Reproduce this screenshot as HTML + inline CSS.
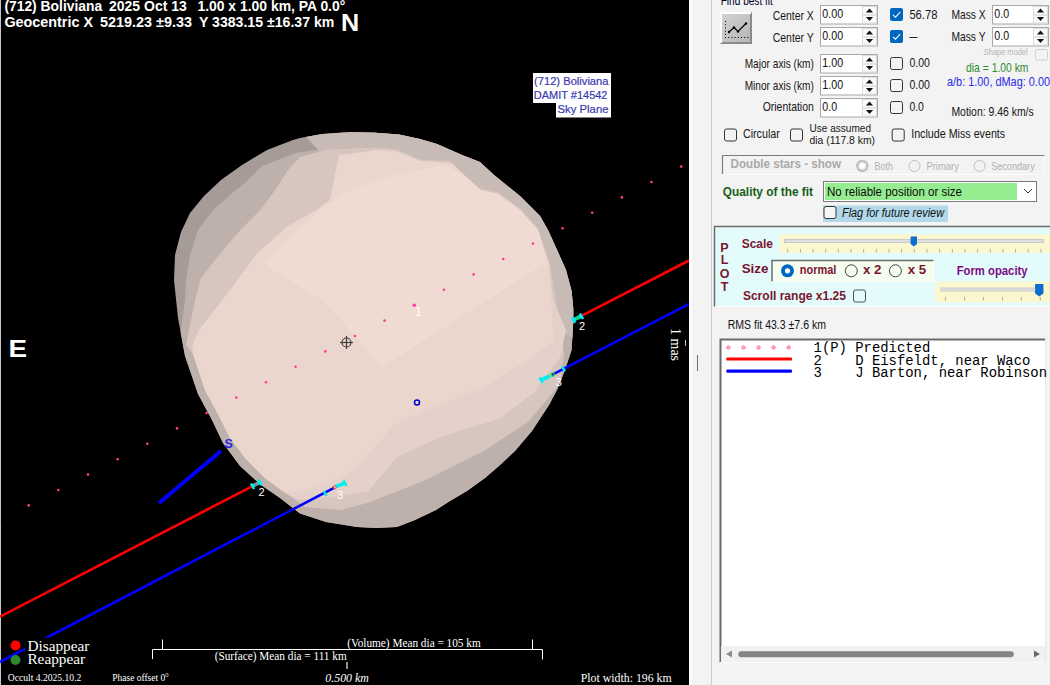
<!DOCTYPE html>
<html><head><meta charset="utf-8">
<style>
html,body{margin:0;padding:0;}
body{width:1050px;height:685px;overflow:hidden;position:relative;background:#f3f3f3;}
svg{position:absolute;left:0;top:0;}
.s{font-family:"Liberation Sans",sans-serif;}
.sf{font-family:"Liberation Serif",serif;}
.m{font-family:"Liberation Mono",monospace;}
</style></head><body>
<svg width="1050" height="685" viewBox="0 0 1050 685">
<rect x="689" y="0" width="361" height="685" fill="#f3f3f3"/>

<rect x="0" y="0" width="689" height="685" fill="#000"/>
<rect x="0" y="0" width="1" height="685" fill="#c8c8c8"/>

<defs><clipPath id="clipA"><polygon points="300,138 322,134 351,132 372,132.5 399,134.4 420,139 437,144 462,155 480,162 494,175 520,196 540,216 548,230 557.5,251 566,270 571.6,291 573.3,309 573.3,321 571.6,350 565,370 557,390 549,405 532,431 515,451 499,466 485,478 467,491 450,501 436,510 415,520 397,527 376,528 357,527 326,522 300,513.6 280,498 261,485 240,466 223,443 212,420 198,394 185,356 178,318 174,280 175,255 181,232 190,213 204,196 221,180 242,165 267,150 293,140"/></clipPath></defs>
<polygon fill="#a69b97" points="300,138 322,134 351,132 372,132.5 399,134.4 420,139 437,144 462,155 480,162 494,175 520,196 540,216 548,230 557.5,251 566,270 571.6,291 573.3,309 573.3,321 571.6,350 565,370 557,390 549,405 532,431 515,451 499,466 485,478 467,491 450,501 436,510 415,520 397,527 376,528 357,527 326,522 300,513.6 280,498 261,485 240,466 223,443 212,420 198,394 185,356 178,318 174,280 175,255 181,232 190,213 204,196 221,180 242,165 267,150 293,140"/>
<g clip-path="url(#clipA)">
<polygon fill="#beb0ab" points="181,330 185,300 186,280 190,255 198,230 213,210 230,195 248,180 262,166 295.7,153.1 325.4,148.6 339,148.6 360,140 380,128 600,100 620,560 150,560 150,380 178,340"/>
<polygon fill="#c8bab5" points="270,100 600,100 600,360 562,330 556,300 550.5,265 538,228 520,208 498,192 480,188.4 464.6,174.7 450.9,161 420,159.3 396,149 377.1,147.3 339.4,149 320,151.7"/>
<polygon fill="#d7c6bf" points="186,345 195,300 200.5,278.6 219.8,254 240.8,229.5 260,210.3 275.8,189.3 288,170 300,157 325,150 339.4,149 377.1,147.3 396,149 420,159.3 450.9,161 464.6,174.7 480,188.4 498,192 520,208 538,228 550.5,265 556,300 562,330 564,355 560,384 528,422 484,451 426,480 367.5,503 340,510 305,507 284,492 265,478 246,459 230,438 219,416 205,390 193,354 186,345"/>
<polygon fill="#e4d1c9" points="199,330 230.3,290 256.5,254 288,226 316,210.3 330,200 339,155.4 377,150 396,151 420,161 451,163 465,176 480,190 498,194 520,210 538,230 549,265 553,300 566,330 560,357.5 534,392.5 499,419 443,436 397,457 367.5,492 330,497 300,500 284,492 265,478 246,459 230,438 219,416 205,390 193,354 192,345"/>
<polygon fill="#ebd6cd" points="199,330 230.3,290 256.5,254 288,226 316,210.3 330,200 339,155.4 377,150 396,151 420,161 451,163 465,176 480,190 498,194 520,210 538,230 549,265 551,300 554,340 528,360 484,387 426,410 394,425 353,471 327,484 300,491 284,492 265,478 246,459 230,438 219,416 205,390 193,354 194,345"/>
<polygon fill="#efdbd2" points="264.3,262.9 292.9,234.3 321.4,208.6 352.9,188.6 398.6,174.3 445,165 465,176 480,190 498,194 520,210 538,230 549,265 542,265 382,367 325,302 276,272"/>
</g>

<!-- chords -->
<line x1="0" y1="616.7" x2="254" y2="485.4" stroke="#ff0000" stroke-width="2.6"/>
<line x1="580" y1="316.6" x2="689" y2="260.5" stroke="#ff0000" stroke-width="2.6"/>
<line x1="0" y1="662" x2="334" y2="487.9" stroke="#0000ff" stroke-width="2.6"/>
<line x1="552" y1="374.8" x2="689" y2="303.8" stroke="#0000ff" stroke-width="2.6"/>
<line x1="159" y1="503" x2="221" y2="451" stroke="#0000ff" stroke-width="4"/>
<text class="s" x="224.5" y="447.5" fill="#2424e0" font-weight="bold" font-size="12.5">S</text>
<circle cx="681.2" cy="166.6" r="1.3" fill="#ff3a9a"/>
<circle cx="651.5" cy="182.0" r="1.3" fill="#ff3a9a"/>
<circle cx="621.9" cy="197.4" r="1.3" fill="#ff3a9a"/>
<circle cx="592.2" cy="212.8" r="1.3" fill="#ff3a9a"/>
<circle cx="562.6" cy="228.2" r="1.3" fill="#ff3a9a"/>
<circle cx="532.9" cy="243.6" r="1.3" fill="#ff3a9a"/>
<circle cx="503.2" cy="259.0" r="1.3" fill="#ff3a9a"/>
<circle cx="473.6" cy="274.4" r="1.3" fill="#ff3a9a"/>
<circle cx="443.9" cy="289.8" r="1.3" fill="#ff3a9a"/>
<circle cx="414.3" cy="305.2" r="1.7" fill="#ff3a9a"/>
<circle cx="384.6" cy="320.6" r="1.3" fill="#ff3a9a"/>
<circle cx="354.9" cy="336.0" r="1.3" fill="#ff3a9a"/>
<circle cx="325.3" cy="351.4" r="1.3" fill="#ff3a9a"/>
<circle cx="295.6" cy="366.8" r="1.3" fill="#ff3a9a"/>
<circle cx="266.0" cy="382.2" r="1.3" fill="#ff3a9a"/>
<circle cx="236.3" cy="397.6" r="1.3" fill="#ff3a9a"/>
<circle cx="206.6" cy="413.0" r="1.3" fill="#ff3a9a"/>
<circle cx="177.0" cy="428.4" r="1.3" fill="#ff3a9a"/>
<circle cx="147.3" cy="443.8" r="1.3" fill="#ff3a9a"/>
<circle cx="117.7" cy="459.2" r="1.3" fill="#ff3a9a"/>
<circle cx="88.0" cy="474.6" r="1.3" fill="#ff3a9a"/>
<circle cx="58.3" cy="490.0" r="1.3" fill="#ff3a9a"/>
<circle cx="28.7" cy="505.4" r="1.3" fill="#ff3a9a"/>
<circle cx="-1.0" cy="520.8" r="1.3" fill="#ff3a9a"/>
<text class="s" x="415" y="316" fill="#fff" font-size="12">1</text>
<!-- markers -->
<g stroke="#00f0f0" fill="none" stroke-linecap="butt">
<path d="M252.5,486 L260,482.3" stroke-width="3.6"/><path d="M251,483.5 L254,489 M258.5,479.7 L261.5,485" stroke-width="2.6"/>
<path d="M573.5,319.8 L581.5,316" stroke-width="3.6"/><path d="M572,317.3 L575,322.8 M580,313.5 L583,319" stroke-width="2.6"/>
<path d="M336,486.5 L345,483" stroke-width="3.6"/><path d="M343.5,480.5 L346.5,486" stroke-width="2.6"/>
<path d="M323.8,490.8 L326.6,495.8" stroke-width="2.4"/>
<path d="M541,380 L550,376" stroke-width="3.6"/><path d="M539.5,377.5 L542.5,383" stroke-width="2.6"/>
<path d="M562,366.2 L564.8,371.4" stroke-width="2.4"/>
</g>
<circle cx="334.6" cy="487.3" r="1.6" fill="none" stroke="#ff3030" stroke-width="1"/>
<circle cx="256.3" cy="484.2" r="1.4" fill="none" stroke="#ff3030" stroke-width="1"/>
<circle cx="552.7" cy="374.6" r="1.8" fill="none" stroke="#20e020" stroke-width="1.2"/>
<circle cx="577.5" cy="318" r="1.4" fill="none" stroke="#20c020" stroke-width="1"/>
<g class="s" fill="#fff" font-size="11">
<text x="258.5" y="496">2</text>
<text x="579" y="330">2</text>
<text x="337" y="498.6">3</text>
<text x="555.7" y="385.5">3</text>
</g>
<!-- crosshair -->
<g stroke="#404040" stroke-width="1.2" fill="none"><circle cx="346.5" cy="342.5" r="4.5"/><line x1="340" y1="342.5" x2="353" y2="342.5"/><line x1="346.5" y1="336" x2="346.5" y2="349"/></g>
<circle cx="417" cy="402.6" r="2.5" fill="none" stroke="#0000d0" stroke-width="1.5"/>

<!-- title -->
<g class="s" fill="#fff" font-weight="bold" font-size="14.2">
<text x="4.4" y="11.2" textLength="97.8" lengthAdjust="spacingAndGlyphs">(712) Boliviana</text>
<text x="109" y="11.2" textLength="77.8" lengthAdjust="spacingAndGlyphs">2025 Oct 13</text>
<text x="197.4" y="11.2" textLength="147.9" lengthAdjust="spacingAndGlyphs">1.00 x 1.00 km, PA 0.0°</text>
<text x="4.4" y="27.2" textLength="88.6" lengthAdjust="spacingAndGlyphs">Geocentric  X</text>
<text x="99.9" y="27.2" textLength="92.2" lengthAdjust="spacingAndGlyphs">5219.23 ±9.33</text>
<text x="199" y="27.2" textLength="135.3" lengthAdjust="spacingAndGlyphs">Y 3383.15 ±16.37 km</text>
</g>
<text class="s" x="341" y="30.9" fill="#fff" font-weight="bold" font-size="23.5" textLength="18.2" lengthAdjust="spacingAndGlyphs">N</text>
<text class="s" x="8.6" y="356.9" fill="#fff" font-weight="bold" font-size="23.5" textLength="18.6" lengthAdjust="spacingAndGlyphs">E</text>

<!-- info box -->
<rect x="533" y="73" width="78" height="30" fill="#fff"/>
<rect x="556" y="103" width="55" height="14.5" fill="#fff"/>
<g class="s" fill="#3a3ab0" stroke="#3a3ab0" stroke-width="0.2" font-size="11" text-anchor="end">
<text x="608.5" y="84.6" textLength="74.5" lengthAdjust="spacingAndGlyphs">(712) Boliviana</text>
<text x="607.5" y="99.3">DAMIT #14542</text>
<text x="608.5" y="112.9" textLength="51" lengthAdjust="spacingAndGlyphs">Sky Plane</text>
</g>
<!-- 1 mas -->
<text class="sf" transform="translate(671,328) rotate(90)" fill="#fff" font-size="14">1 mas</text>
<rect x="685" y="340" width="1" height="6" fill="#c8c8c8"/>

<!-- legend -->
<circle cx="15.5" cy="645.4" r="5" fill="#ff0000"/>
<circle cx="15.5" cy="660" r="5" fill="#2a8a2a"/>
<rect x="25" y="637.5" width="66" height="14" fill="#000"/>
<g class="sf" fill="#fff" font-size="14">
<text x="27.4" y="650.5" textLength="62" lengthAdjust="spacingAndGlyphs">Disappear</text>
<text x="27.4" y="664.3" textLength="57.8" lengthAdjust="spacingAndGlyphs">Reappear</text>
</g>
<g class="sf" fill="#fff" font-size="10.5">
<text x="7.7" y="680.8" textLength="73.7" lengthAdjust="spacingAndGlyphs">Occult 4.2025.10.2</text>
<text x="112.3" y="680.8" textLength="56.6" lengthAdjust="spacingAndGlyphs">Phase offset 0°</text>
</g>
<!-- scale bars -->
<g stroke="#fff" stroke-width="1" fill="none">
<path d="M152.5,659 V649.5 H542.5 V659.5"/>
<path d="M162.5,639.5 V649.5 M532.5,639.5 V649.5"/>
</g>
<g class="sf" fill="#fff" font-size="12">
<text x="347.3" y="646.7" textLength="133.4" lengthAdjust="spacingAndGlyphs">(Volume) Mean dia = 105 km</text>
<text x="214.7" y="660.2" textLength="132" lengthAdjust="spacingAndGlyphs">(Surface) Mean dia = 111 km</text>
<text x="580.7" y="682.3" textLength="91" lengthAdjust="spacingAndGlyphs">Plot width: 196 km</text>
</g>
<text class="sf" x="325.3" y="682.3" fill="#fff" font-size="13" font-style="italic" textLength="43.5" lengthAdjust="spacingAndGlyphs">0.500 km</text>
<rect x="346" y="662" width="2" height="7" fill="#909090"/>

<rect x="689" y="0" width="361" height="685" fill="#f3f3f3"/>
<rect x="689" y="0" width="3" height="685" fill="#fbfbfb"/>
<rect x="711" y="0" width="1" height="685" fill="#cfcfcf"/>
<rect x="697" y="355" width="1" height="16" fill="#707070"/>
<text class="s" x="720.7" y="4.6" font-size="12" fill="#000028" textLength="52.2" lengthAdjust="spacingAndGlyphs">Find best fit</text>
<defs><linearGradient id="bg1" x1="0" y1="0" x2="1" y2="1"><stop offset="0" stop-color="#d4d4d4"/><stop offset="1" stop-color="#b4b4b4"/></linearGradient></defs>
<rect x="720.5" y="12.5" width="31" height="31" fill="url(#bg1)" stroke="#9a9a9a"/>
<path d="M721,43 V13 H751" fill="none" stroke="#ffffff" stroke-width="2"/>
<path d="M722,43 H751 V14" fill="none" stroke="#8a8a8a" stroke-width="2"/>
<g fill="#000"><rect x="725.0" y="37" width="1" height="1"/><rect x="728.2" y="37" width="1" height="1"/><rect x="731.4" y="37" width="1" height="1"/><rect x="734.6" y="37" width="1" height="1"/><rect x="737.8" y="37" width="1" height="1"/><rect x="741.0" y="37" width="1" height="1"/><rect x="744.2" y="37" width="1" height="1"/><rect x="747.4" y="37" width="1" height="1"/><rect x="725" y="21.0" width="1" height="1"/><rect x="725" y="24.2" width="1" height="1"/><rect x="725" y="27.4" width="1" height="1"/><rect x="725" y="30.6" width="1" height="1"/><rect x="725" y="33.8" width="1" height="1"/></g>
<path d="M729,32 L734,27.5 L738,31.5 L746,23.5" fill="none" stroke="#000" stroke-width="1.2"/>
<g fill="#000"><circle cx="729" cy="32" r="1.2"/><circle cx="734" cy="27.5" r="1.2"/><circle cx="738" cy="31.5" r="1.2"/><circle cx="746" cy="23.5" r="1.2"/></g>
<text class="s" x="813.8" y="19.8" font-size="12.2" fill="#161616" text-anchor="end" textLength="41.1" lengthAdjust="spacingAndGlyphs">Center X</text>
<text class="s" x="813.8" y="41.7" font-size="12.2" fill="#161616" text-anchor="end" textLength="41.1" lengthAdjust="spacingAndGlyphs">Center Y</text>
<text class="s" x="813.8" y="68.3" font-size="12.2" fill="#161616" text-anchor="end" textLength="69.1" lengthAdjust="spacingAndGlyphs">Major axis (km)</text>
<text class="s" x="813.8" y="90.2" font-size="12.2" fill="#161616" text-anchor="end" textLength="69.1" lengthAdjust="spacingAndGlyphs">Minor axis (km)</text>
<text class="s" x="813.8" y="111.2" font-size="12.2" fill="#161616" text-anchor="end" textLength="51.1" lengthAdjust="spacingAndGlyphs">Orientation</text>
<rect x="820.5" y="5.5" width="57" height="18.5" fill="#fff" stroke="#a8a8a8"/>
<rect x="862.5" y="6.5" width="14" height="8.25" fill="#fbfbfb" stroke="#dcdcdc"/>
<rect x="862.5" y="15.25" width="14" height="7.75" fill="#fbfbfb" stroke="#dcdcdc"/>
<path d="M865.9,12.6 L873.1,12.6 L869.5,8.6 Z" fill="#111"/>
<path d="M865.9,16.9 L873.1,16.9 L869.5,20.9 Z" fill="#111"/>
<text class="s" x="822.3" y="17.9" font-size="12.5" fill="#101010" textLength="20.8" lengthAdjust="spacingAndGlyphs">0.00</text>
<rect x="820.5" y="27.5" width="57" height="18.5" fill="#fff" stroke="#a8a8a8"/>
<rect x="862.5" y="28.5" width="14" height="8.25" fill="#fbfbfb" stroke="#dcdcdc"/>
<rect x="862.5" y="37.25" width="14" height="7.75" fill="#fbfbfb" stroke="#dcdcdc"/>
<path d="M865.9,34.6 L873.1,34.6 L869.5,30.6 Z" fill="#111"/>
<path d="M865.9,38.9 L873.1,38.9 L869.5,42.9 Z" fill="#111"/>
<text class="s" x="822.3" y="39.9" font-size="12.5" fill="#101010" textLength="20.8" lengthAdjust="spacingAndGlyphs">0.00</text>
<rect x="820.5" y="54.5" width="57" height="18.5" fill="#fff" stroke="#a8a8a8"/>
<rect x="862.5" y="55.5" width="14" height="8.25" fill="#fbfbfb" stroke="#dcdcdc"/>
<rect x="862.5" y="64.25" width="14" height="7.75" fill="#fbfbfb" stroke="#dcdcdc"/>
<path d="M865.9,61.6 L873.1,61.6 L869.5,57.6 Z" fill="#111"/>
<path d="M865.9,65.9 L873.1,65.9 L869.5,69.9 Z" fill="#111"/>
<text class="s" x="822.3" y="66.9" font-size="12.5" fill="#101010" textLength="20.8" lengthAdjust="spacingAndGlyphs">1.00</text>
<rect x="820.5" y="76.5" width="57" height="18.5" fill="#fff" stroke="#a8a8a8"/>
<rect x="862.5" y="77.5" width="14" height="8.25" fill="#fbfbfb" stroke="#dcdcdc"/>
<rect x="862.5" y="86.25" width="14" height="7.75" fill="#fbfbfb" stroke="#dcdcdc"/>
<path d="M865.9,83.6 L873.1,83.6 L869.5,79.6 Z" fill="#111"/>
<path d="M865.9,87.9 L873.1,87.9 L869.5,91.9 Z" fill="#111"/>
<text class="s" x="822.3" y="88.9" font-size="12.5" fill="#101010" textLength="20.8" lengthAdjust="spacingAndGlyphs">1.00</text>
<rect x="820.5" y="98.5" width="57" height="18.5" fill="#fff" stroke="#a8a8a8"/>
<rect x="862.5" y="99.5" width="14" height="8.25" fill="#fbfbfb" stroke="#dcdcdc"/>
<rect x="862.5" y="108.25" width="14" height="7.75" fill="#fbfbfb" stroke="#dcdcdc"/>
<path d="M865.9,105.6 L873.1,105.6 L869.5,101.6 Z" fill="#111"/>
<path d="M865.9,109.9 L873.1,109.9 L869.5,113.9 Z" fill="#111"/>
<text class="s" x="822.3" y="110.9" font-size="12.5" fill="#101010" textLength="14.8" lengthAdjust="spacingAndGlyphs">0.0</text>
<rect x="890" y="8" width="13" height="13" rx="2" fill="#0067c0"/>
<path d="M893,14.8 L895.5,17.2 L900.2,12" fill="none" stroke="#fff" stroke-width="1.1"/>
<rect x="890" y="30" width="13" height="13" rx="2" fill="#0067c0"/>
<path d="M893,36.8 L895.5,39.2 L900.2,34" fill="none" stroke="#fff" stroke-width="1.1"/>
<rect x="890.5" y="57.5" width="12" height="12" rx="2" fill="none" stroke="#333" stroke-width="1"/>
<rect x="890.5" y="79.5" width="12" height="12" rx="2" fill="none" stroke="#333" stroke-width="1"/>
<rect x="890.5" y="101.5" width="12" height="12" rx="2" fill="none" stroke="#333" stroke-width="1"/>
<text class="s" x="909.4" y="18.9" font-size="12.2" fill="#161616" textLength="28" lengthAdjust="spacingAndGlyphs">56.78</text>
<rect x="909.5" y="37" width="8" height="1" fill="#222"/>
<text class="s" x="909.4" y="67.4" font-size="12.2" fill="#161616" textLength="20.5" lengthAdjust="spacingAndGlyphs">0.00</text>
<text class="s" x="909.4" y="89.3" font-size="12.2" fill="#161616" textLength="20.5" lengthAdjust="spacingAndGlyphs">0.00</text>
<text class="s" x="909.4" y="111.2" font-size="12.2" fill="#161616" textLength="14.5" lengthAdjust="spacingAndGlyphs">0.0</text>
<text class="s" x="951.4" y="19.3" font-size="12.2" fill="#161616" textLength="34.2" lengthAdjust="spacingAndGlyphs">Mass X</text>
<text class="s" x="951.4" y="41.3" font-size="12.2" fill="#161616" textLength="34.2" lengthAdjust="spacingAndGlyphs">Mass Y</text>
<rect x="992.5" y="5.5" width="56" height="18.5" fill="#fff" stroke="#a8a8a8"/>
<rect x="1033.5" y="6.5" width="14" height="8.25" fill="#fbfbfb" stroke="#dcdcdc"/>
<rect x="1033.5" y="15.25" width="14" height="7.75" fill="#fbfbfb" stroke="#dcdcdc"/>
<path d="M1036.9,12.6 L1044.1,12.6 L1040.5,8.6 Z" fill="#111"/>
<path d="M1036.9,16.9 L1044.1,16.9 L1040.5,20.9 Z" fill="#111"/>
<text class="s" x="994.3" y="17.9" font-size="12.5" fill="#101010" textLength="14.8" lengthAdjust="spacingAndGlyphs">0.0</text>
<rect x="992.5" y="27.5" width="56" height="18.5" fill="#fff" stroke="#a8a8a8"/>
<rect x="1033.5" y="28.5" width="14" height="8.25" fill="#fbfbfb" stroke="#dcdcdc"/>
<rect x="1033.5" y="37.25" width="14" height="7.75" fill="#fbfbfb" stroke="#dcdcdc"/>
<path d="M1036.9,34.6 L1044.1,34.6 L1040.5,30.6 Z" fill="#111"/>
<path d="M1036.9,38.9 L1044.1,38.9 L1040.5,42.9 Z" fill="#111"/>
<text class="s" x="994.3" y="39.9" font-size="12.5" fill="#101010" textLength="14.8" lengthAdjust="spacingAndGlyphs">0.0</text>
<text class="s" x="983.8" y="55.3" font-size="9" fill="#b4b4b4" textLength="43.8" lengthAdjust="spacingAndGlyphs">Shape model</text>
<rect x="1035.5" y="49.5" width="12" height="10.5" rx="2" fill="none" stroke="#d0d0d0"/>
<text class="s" x="966" y="71.5" font-size="12.2" fill="#2e8b2e" textLength="62.5" lengthAdjust="spacingAndGlyphs">dia = 1.00 km</text>
<text class="s" x="947" y="85.8" font-size="12.2" fill="#2a2ae8" textLength="103" lengthAdjust="spacingAndGlyphs">a/b: 1.00, dMag: 0.00</text>
<text class="s" x="951.4" y="115.6" font-size="12.2" fill="#161616" textLength="82.3" lengthAdjust="spacingAndGlyphs">Motion: 9.46 km/s</text>
<rect x="724.5" y="129.0" width="12" height="12" rx="2" fill="none" stroke="#333" stroke-width="1"/>
<text class="s" x="742.9" y="138.4" font-size="12.2" fill="#161616" textLength="37" lengthAdjust="spacingAndGlyphs">Circular</text>
<rect x="790.5" y="129.0" width="12" height="12" rx="2" fill="none" stroke="#333" stroke-width="1"/>
<text class="s" x="809.5" y="131.9" font-size="11" fill="#161616" textLength="61.5" lengthAdjust="spacingAndGlyphs">Use assumed</text>
<text class="s" x="809.5" y="144.2" font-size="11" fill="#161616" textLength="65.5" lengthAdjust="spacingAndGlyphs">dia (117.8 km)</text>
<rect x="892.2" y="129.0" width="12" height="12" rx="2" fill="none" stroke="#333" stroke-width="1"/>
<text class="s" x="911.2" y="138.4" font-size="12.2" fill="#161616" textLength="94" lengthAdjust="spacingAndGlyphs">Include Miss events</text>
<path d="M722.5,174 V155.5 H1044.5" fill="none" stroke="#7c7c7c" stroke-width="1.2"/>
<path d="M723,174.5 H1044.5 V156" fill="none" stroke="#fdfdfd" stroke-width="1"/>
<text class="s" x="730.6" y="168.3" font-size="12.5" fill="#a9a9a9" font-weight="bold" textLength="110.4" lengthAdjust="spacingAndGlyphs">Double stars - show</text>
<circle cx="862.3" cy="166" r="5" fill="none" stroke="#c0c0c0" stroke-width="2.4"/>
<circle cx="862.3" cy="166" r="2" fill="#fff"/>
<text class="s" x="874.4" y="170.3" font-size="11" fill="#b0b0b0" textLength="18.5" lengthAdjust="spacingAndGlyphs">Both</text>
<circle cx="914.5" cy="166" r="5.5" fill="none" stroke="#c0c0c0" stroke-width="1"/>
<text class="s" x="926.4" y="170.3" font-size="11" fill="#b0b0b0" textLength="32.5" lengthAdjust="spacingAndGlyphs">Primary</text>
<circle cx="979.6" cy="166" r="5.5" fill="none" stroke="#c0c0c0" stroke-width="1"/>
<text class="s" x="991.2" y="170.3" font-size="11" fill="#b0b0b0" textLength="43.5" lengthAdjust="spacingAndGlyphs">Secondary</text>
<text class="s" x="722.8" y="195.5" font-size="13" fill="#155e15" font-weight="bold" textLength="90.2" lengthAdjust="spacingAndGlyphs">Quality of the fit</text>
<rect x="823.5" y="181.5" width="213" height="20" fill="#fff" stroke="#7a7a7a"/>
<rect x="825" y="183" width="192" height="17" fill="#96ec90"/>
<text class="s" x="827" y="196" font-size="12.5" fill="#0a0a0a" textLength="135" lengthAdjust="spacingAndGlyphs">No reliable position or size</text>
<path d="M1024,189 L1028,193 L1032,189" fill="none" stroke="#333" stroke-width="1"/>
<rect x="823" y="205.5" width="125" height="16.5" fill="#b1d9ea"/>
<rect x="824" y="206.5" width="12" height="12" rx="2" fill="#f6f6f6" stroke="#333"/>
<text class="s" x="842" y="217.3" font-size="12.5" fill="#101010" font-style="italic" textLength="102" lengthAdjust="spacingAndGlyphs">Flag for future review</text>
<rect x="714" y="226.5" width="340" height="80" fill="#e4fbfb"/>
<path d="M714.5,306.5 V226.5 H1050" fill="none" stroke="#6c6c6c" stroke-width="1.5"/>
<path d="M715,306.5 H1050" fill="none" stroke="#fff" stroke-width="1"/>
<text class="s" x="724.5" y="251.5" font-size="12.5" fill="#7a1530" font-weight="bold" text-anchor="middle">P</text>
<text class="s" x="724.5" y="263.8" font-size="12.5" fill="#7a1530" font-weight="bold" text-anchor="middle">L</text>
<text class="s" x="724.5" y="277.8" font-size="12.5" fill="#7a1530" font-weight="bold" text-anchor="middle">O</text>
<text class="s" x="724.5" y="291" font-size="12.5" fill="#7a1530" font-weight="bold" text-anchor="middle">T</text>
<text class="s" x="741.7" y="247.7" font-size="12.5" fill="#7a1530" font-weight="bold" textLength="31.3" lengthAdjust="spacingAndGlyphs">Scale</text>
<rect x="779.7" y="234.4" width="271" height="18.5" fill="#fbf8d0"/>
<rect x="784.5" y="239.5" width="259" height="3" fill="#dedede" stroke="#cacaca" stroke-width="1"/>
<g fill="#a8a8a8"><rect x="787.2" y="249" width="1" height="3.5"/><rect x="799.9" y="249" width="1" height="3.5"/><rect x="812.5" y="249" width="1" height="3.5"/><rect x="825.2" y="249" width="1" height="3.5"/><rect x="837.8" y="249" width="1" height="3.5"/><rect x="850.5" y="249" width="1" height="3.5"/><rect x="863.2" y="249" width="1" height="3.5"/><rect x="875.8" y="249" width="1" height="3.5"/><rect x="888.5" y="249" width="1" height="3.5"/><rect x="901.1" y="249" width="1" height="3.5"/><rect x="913.8" y="249" width="1" height="3.5"/><rect x="926.5" y="249" width="1" height="3.5"/><rect x="939.1" y="249" width="1" height="3.5"/><rect x="951.8" y="249" width="1" height="3.5"/><rect x="964.4" y="249" width="1" height="3.5"/><rect x="977.1" y="249" width="1" height="3.5"/><rect x="989.8" y="249" width="1" height="3.5"/><rect x="1002.4" y="249" width="1" height="3.5"/><rect x="1015.1" y="249" width="1" height="3.5"/><rect x="1027.7" y="249" width="1" height="3.5"/><rect x="1040.4" y="249" width="1" height="3.5"/></g>
<path d="M910.6,236.6 H917 V244 L913.8,246.5 L910.6,244 Z" fill="#0a6fd0"/>
<text class="s" x="741.7" y="273.4" font-size="12.5" fill="#7a1530" font-weight="bold" textLength="26.8" lengthAdjust="spacingAndGlyphs">Size</text>
<rect x="772" y="260" width="161.5" height="21.5" fill="#f5fdf0"/>
<path d="M772,281.5 V260.5 H933.5" fill="none" stroke="#6e6e6e" stroke-width="1.5"/>
<path d="M772.5,281.5 H933.5 V261" fill="none" stroke="#fdfdfd" stroke-width="1"/>
<circle cx="787.5" cy="270.8" r="6.5" fill="#0067c0"/>
<circle cx="787.5" cy="270.8" r="2.6" fill="#fff"/>
<text class="s" x="799.8" y="274.3" font-size="12.5" fill="#7a1530" font-weight="bold" textLength="36.5" lengthAdjust="spacingAndGlyphs">normal</text>
<circle cx="851.3" cy="270.8" r="6.0" fill="none" stroke="#444" stroke-width="1"/>
<text class="s" x="863" y="274.3" font-size="12.5" fill="#7a1530" font-weight="bold" textLength="18.5" lengthAdjust="spacingAndGlyphs">x 2</text>
<circle cx="895.4" cy="270.8" r="6.0" fill="none" stroke="#444" stroke-width="1"/>
<text class="s" x="907.7" y="274.3" font-size="12.5" fill="#7a1530" font-weight="bold" textLength="18.5" lengthAdjust="spacingAndGlyphs">x 5</text>
<text class="s" x="956.7" y="274.6" font-size="12.5" fill="#7d0a82" font-weight="bold" textLength="70.9" lengthAdjust="spacingAndGlyphs">Form opacity</text>
<rect x="935.1" y="281.6" width="115" height="20.7" fill="#fbf8d0"/>
<rect x="941" y="288" width="102" height="3" fill="#dedede" stroke="#cacaca" stroke-width="1"/>
<g fill="#a8a8a8"><rect x="945.0" y="297" width="1" height="3.5"/><rect x="964.0" y="297" width="1" height="3.5"/><rect x="982.9" y="297" width="1" height="3.5"/><rect x="1001.9" y="297" width="1" height="3.5"/><rect x="1020.8" y="297" width="1" height="3.5"/><rect x="1039.8" y="297" width="1" height="3.5"/></g>
<path d="M1035.1,284 H1043.4 V293.5 L1039.25,296.5 L1035.1,293.5 Z" fill="#0a6fd0"/>
<text class="s" x="742.9" y="299.7" font-size="12.5" fill="#7a1530" font-weight="bold" textLength="103" lengthAdjust="spacingAndGlyphs">Scroll range x1.25</text>
<rect x="853.5" y="290.0" width="12" height="12" rx="2" fill="none" stroke="#555" stroke-width="1"/>
<text class="s" x="727.7" y="328.8" font-size="12" fill="#111" textLength="98.3" lengthAdjust="spacingAndGlyphs">RMS fit 43.3 ±7.6 km</text>
<rect x="720" y="339.5" width="326" height="323" fill="#fff"/>
<path d="M720.5,662.5 V339.5 H1045" fill="none" stroke="#6a6a6a" stroke-width="2"/>
<rect x="721" y="646" width="324.5" height="16.5" fill="#f1f1f1"/>
<path d="M726,654 L732,650.5 V657.5 Z" fill="#8a8a8a"/>
<path d="M1040,654 L1034,650.5 V657.5 Z" fill="#6a6a6a"/>
<rect x="738.3" y="651.3" width="275.5" height="6" rx="3" fill="#858585"/>
<rect x="720" y="662" width="326" height="1" fill="#fafafa"/>
<rect x="1045" y="339" width="1" height="324" fill="#e8e8e8"/>
<circle cx="728.4" cy="347.5" r="1.6" fill="#ffc0e0" stroke="#ff5aa8" stroke-width="1"/>
<circle cx="743.5" cy="347.5" r="1.6" fill="#ffc0e0" stroke="#ff5aa8" stroke-width="1"/>
<circle cx="758.6" cy="347.5" r="1.6" fill="#ffc0e0" stroke="#ff5aa8" stroke-width="1"/>
<circle cx="773.6" cy="347.5" r="1.6" fill="#ffc0e0" stroke="#ff5aa8" stroke-width="1"/>
<circle cx="788.6" cy="347.5" r="1.6" fill="#ffc0e0" stroke="#ff5aa8" stroke-width="1"/>
<rect x="726.3" y="357.4" width="65.7" height="3.2" rx="1.2" fill="#ff0000"/>
<rect x="726.3" y="369.6" width="65.7" height="3.2" rx="1.2" fill="#0000ff"/>
<text class="m" x="813.6" y="352.4" font-size="13.9" fill="#000" xml:space="preserve">1(P) Predicted</text>
<text class="m" x="813.6" y="364.6" font-size="13.9" fill="#000" xml:space="preserve">2    D Eisfeldt, near Waco</text>
<text class="m" x="813.6" y="376.8" font-size="13.9" fill="#000" xml:space="preserve">3    J Barton, near Robinson</text>
</svg>
</body></html>
